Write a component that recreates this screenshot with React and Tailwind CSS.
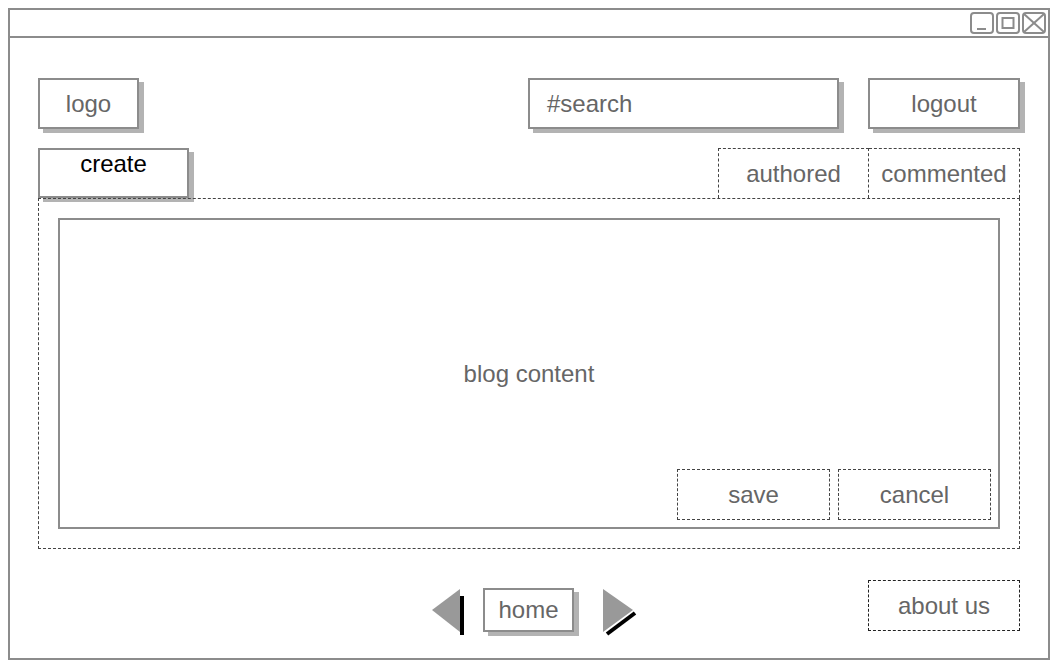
import React from 'react';

// wireframe-style page: solid boxes carry a flat grey drop shadow
const solid = 'border-2 border-[#8c8c8c] bg-white shadow-[5px_4px_0_0_#b3b3b3]';
const dashed = 'border border-dashed border-[#444]';

const WindowControls = () => (
  <svg width="76" height="22" viewBox="0 0 76 22" fill="none" stroke="#8c8c8c" strokeWidth="2">
    <rect x="1" y="1" width="22" height="20" rx="3" />
    <line x1="7" y1="17" x2="16" y2="17" />
    <rect x="27" y="1" width="22" height="20" rx="3" />
    <rect x="32.5" y="6" width="11" height="10" />
    <rect x="53" y="1" width="22" height="20" rx="3" />
    <line x1="54" y1="2" x2="74" y2="20" />
    <line x1="74" y1="2" x2="54" y2="20" />
  </svg>
);

const PrevArrow = () => (
  <svg width="35" height="50" viewBox="0 0 35 50">
    <rect x="30" y="9" width="4" height="39" fill="#000" />
    <polygon points="2,23 30,2 30,45" fill="#999" />
  </svg>
);

const NextArrow = () => (
  <svg width="40" height="50" viewBox="0 0 40 50">
    <line x1="7" y1="47" x2="35" y2="26" stroke="#000" strokeWidth="4" />
    <polygon points="3,2 3,45 33,23" fill="#999" />
  </svg>
);

export default function App() {
  return (
    <div className="w-[1059px] h-[667px] bg-white pl-[8px] pt-[8px] font-['Liberation_Sans',Arial,sans-serif] text-[24px] text-[#666]">
      <div className="w-[1042px] h-[652px] border-2 border-[#8c8c8c] flex flex-col">
        {/* title bar */}
        <div className="h-[28px] border-b-2 border-[#8c8c8c] flex items-center justify-end pr-[2px]">
          <WindowControls />
        </div>

        <div className="flex-1 pl-[28px] pr-[28px] pt-[40px] flex flex-col">
          {/* header */}
          <div className="flex h-[51px]">
            <div className={`${solid} w-[101px] flex items-center justify-center`}>logo</div>
            <div className={`${solid} ml-auto w-[311px] flex items-center pl-[17px]`}>#search</div>
            <div className={`${solid} ml-[29px] w-[152px] flex items-center justify-center`}>logout</div>
          </div>

          {/* tabs */}
          <div className="mt-[19px] h-[50px] flex justify-between">
            <div className={`${solid} w-[151px] h-[50px] flex justify-center leading-[28px] text-black`}>create</div>
            <div className="flex">
              <div className="w-[151px] border-l border-t border-r border-dashed border-[#444] flex items-center justify-center">
                authored
              </div>
              <div className="w-[151px] border-t border-r border-dashed border-[#444] flex items-center justify-center">
                commented
              </div>
            </div>
          </div>

          {/* content panel */}
          <div className={`${dashed} h-[351px] p-[19px] flex`}>
            <div className="flex-1 border-2 border-[#8c8c8c] grid">
              <span className="col-start-1 row-start-1 place-self-center">blog content</span>
              <div className="col-start-1 row-start-1 self-end justify-self-end flex gap-[8px] pr-[7px] pb-[7px]">
                <div className={`${dashed} w-[153px] h-[51px] flex items-center justify-center`}>save</div>
                <div className={`${dashed} w-[153px] h-[51px] flex items-center justify-center`}>cancel</div>
              </div>
            </div>
          </div>

          {/* footer */}
          <div className="flex items-start pt-[31px]">
            <div className="ml-[392px] mt-[7px] flex items-start">
              <PrevArrow />
              <div className={`${solid} ml-[18px] mt-[1px] w-[91px] h-[44px] flex items-center justify-center`}>home</div>
              <div className="ml-[26px]">
                <NextArrow />
              </div>
            </div>
            <div className="ml-auto w-[152px] h-[51px] border border-dashed border-[#222] flex items-center justify-center">
              about us
            </div>
          </div>
        </div>
      </div>
    </div>
  );
}
